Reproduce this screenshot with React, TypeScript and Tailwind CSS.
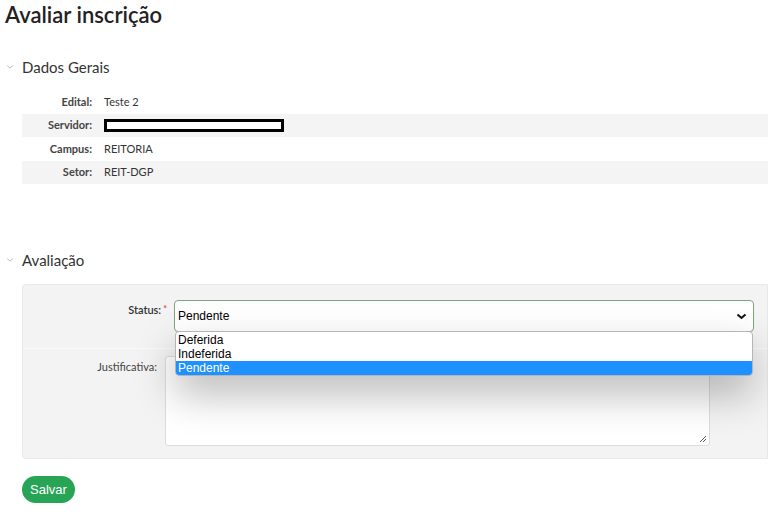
import { ChevronDown } from "lucide-react";

const rows = [
  { label: "Edital:", value: "Teste 2" },
  { label: "Servidor:", value: null },
  { label: "Campus:", value: "REITORIA" },
  { label: "Setor:", value: "REIT-DGP" },
];

function SectionTitle({ title }: { title: string }) {
  return (
    <div className="flex items-center gap-[7px] pl-[5px]">
      <ChevronDown className="w-[10px] h-[10px] text-[#aaa]" strokeWidth={2} />
      <h2 className="text-[15px] text-[#333] leading-[20px]">{title}</h2>
    </div>
  );
}

export default function App() {
  return (
    <div className="w-[768px] h-[512px] bg-white overflow-hidden font-['Lato','Liberation_Sans',sans-serif]">
      <h1 className="pl-[5px] pt-[1px] text-[22px] font-semibold text-[#222] leading-[28px]">
        Avaliar inscrição
      </h1>

      {/* Dados gerais */}
      <div className="mt-[28px]">
        <SectionTitle title="Dados Gerais" />
        <div className="ml-[22px] mt-[13px]">
          {rows.map((r, i) => (
            <div
              key={r.label}
              className={`flex items-center h-[23.5px] text-[11px] ${i % 2 === 1 ? "bg-[#f4f4f4]" : "bg-white"}`}
            >
              <span className="w-[70px] text-right font-bold text-[#444]">{r.label}</span>
              <span className="ml-[12px] text-[#333]">
                {r.value ?? (
                  <span className="block w-[180px] h-[13px] border-[3px] border-black bg-white" />
                )}
              </span>
            </div>
          ))}
        </div>
      </div>

      {/* Avaliação */}
      <div className="mt-[66px]">
        <SectionTitle title="Avaliação" />
        <div className="ml-[22px] mt-[14px] h-[175px] bg-[#f3f3f3] border border-[#e8e8e8] rounded-l-[4px] relative">
          <div className="flex h-[64px] border-b border-[#fafafa]">
            <div className="w-[144px] pt-[17px] text-right text-[11px] font-semibold text-[#333]">
              Status:<span className="text-[#e23b3b] text-[9px] align-top ml-[2px]">*</span>
            </div>
            <div className="ml-[7px] mt-[15px] relative">
              <div className="w-[580px] h-[32px] bg-white border border-[#7aa87a] rounded-[4px] flex items-center justify-between pl-[3px] pr-[6px] font-['Liberation_Sans',sans-serif] text-[12px] text-black">
                <span>Pendente</span>
                <svg width="11" height="7" viewBox="0 0 11 7">
                  <path d="M1.5 1.5 L5.5 5 L9.5 1.5" stroke="#111" strokeWidth="2" fill="none" />
                </svg>
              </div>
              <div className="absolute left-[1px] top-[31px] w-[578px] z-10 bg-white border border-[#b5b5b5] rounded-[4px] overflow-hidden shadow-[0_18px_40px_rgba(0,0,0,0.28)] font-['Liberation_Sans',sans-serif] text-[12px] leading-[14px] text-black pt-[1px]">
                <div className="px-[2px]">Deferida</div>
                <div className="px-[2px]">Indeferida</div>
                <div className="px-[2px] bg-[#1e90ff] text-white">Pendente</div>
              </div>
            </div>
          </div>
          <div className="flex">
            <div className="w-[134px] pt-[10px] text-right text-[11px] text-[#444]">Justificativa:</div>
            <div className="ml-[8px] mt-[7px] w-[545px] h-[90px] bg-white border border-[#dcdcdc] rounded-[3px] relative">
              <svg className="absolute right-[2px] bottom-[2px]" width="8" height="8" viewBox="0 0 8 8">
                <path d="M7 1 L1 7 M7 4 L4 7" stroke="#555" strokeWidth="1" />
              </svg>
            </div>
          </div>
        </div>
      </div>

      <button className="ml-[22px] mt-[17px] h-[27px] px-[8px] rounded-full bg-[#27a456] text-white text-[13px] font-['Liberation_Sans',sans-serif]">
        Salvar
      </button>
    </div>
  );
}
